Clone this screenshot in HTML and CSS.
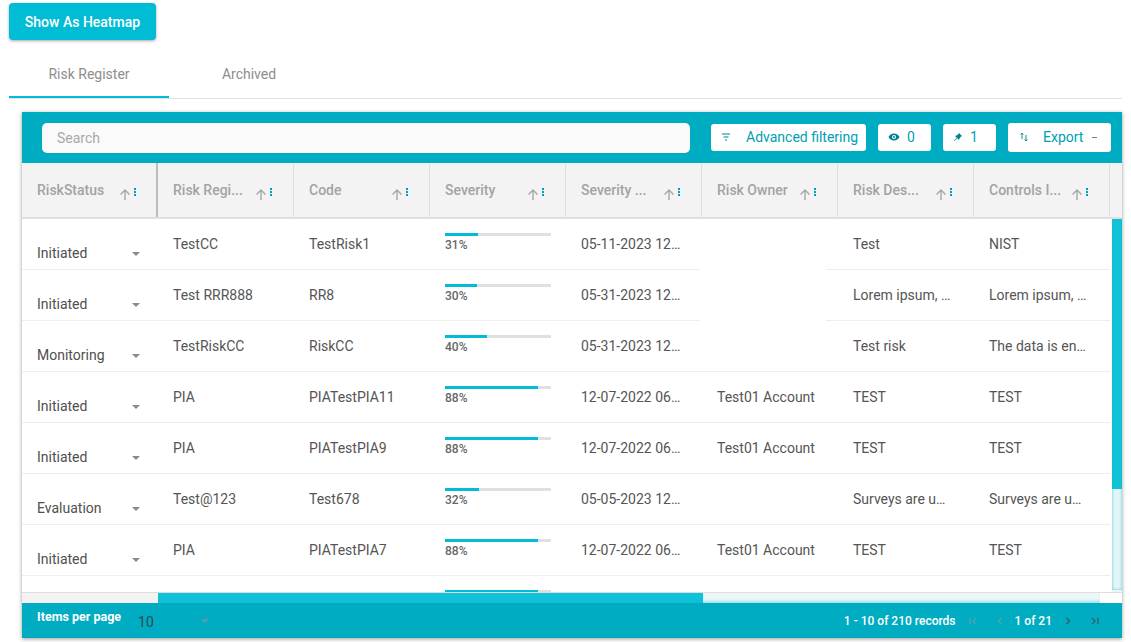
FILE: index.html
```html
<!DOCTYPE html>
<html lang="en">
<head>
  <meta charset="UTF-8" />
  <title>Risk Register</title>
  <link rel="stylesheet" href="styles.css">
</head>
<body>
  <button class="heatmap-btn">Show As Heatmap</button>

  <div class="tabs">
    <div class="tab active">Risk Register</div>
    <div class="tab">Archived</div>
  </div>

  <div class="card">
    <div class="toolbar">
      <div class="search">Search</div>
      <div class="tool tool-filter">
        <svg width="12" height="12" viewBox="0 0 12 12"><path d="M2 3h8M3.500 6h5M5 9h2" stroke="#00838f" stroke-width="1"/></svg>
        <span>Advanced filtering</span>
      </div>
      <div class="tool tool-small">
        <svg width="12" height="12" viewBox="0 0 24 24"><path fill="#00838f" d="M12 5C7 5 3 8 1 12c2 4 6 7 11 7s9-3 11-7c-2-4-6-7-11-7zm0 11a4 4 0 1 1 0-8 4 4 0 0 1 0 8zm0-6a2 2 0 1 0 0 4 2 2 0 0 0 0-4z"/></svg>
        <span>0</span>
      </div>
      <div class="tool tool-small">
        <svg width="10" height="10" viewBox="0 0 10 10"><path fill="#00838f" d="M6 1l3 3-1 .5-1.500 2L6 8 4.200 6.200 1.500 9 1 8.500l2.800-2.700L2 4l1.500-.5 2-1.500z"/></svg>
        <span>1</span>
      </div>
      <div class="tool tool-export">
        <svg width="10" height="10" viewBox="0 0 10 10"><path d="M3 1v6M1.800 2.500L3 1l1.200 1.500M7 9V3M5.800 7.500L7 9l1.200-1.500" stroke="#00838f" stroke-width=".9" fill="none"/></svg>
        <span class="export-label">Export</span>
        <span class="export-caret"></span>
      </div>
    </div>

    <div class="head-row">
      <div class="head-grid">
        <div class="hcell hcell-first"><span class="hlabel">RiskStatus</span><svg class="sort" width="12" height="12" viewBox="0 0 12 12"><path d="M6 12V2M1.500 6.500L6 2l4.500 4.500" stroke="#a6a6a6" stroke-width="1.400" fill="none"/></svg><i class="dots"></i></div>
        <div class="hcell"><span class="hlabel">Risk Regi...</span><svg class="sort" width="12" height="12" viewBox="0 0 12 12"><path d="M6 12V2M1.500 6.500L6 2l4.500 4.500" stroke="#a6a6a6" stroke-width="1.400" fill="none"/></svg><i class="dots"></i></div>
        <div class="hcell"><span class="hlabel">Code</span><svg class="sort" width="12" height="12" viewBox="0 0 12 12"><path d="M6 12V2M1.500 6.500L6 2l4.500 4.500" stroke="#a6a6a6" stroke-width="1.400" fill="none"/></svg><i class="dots"></i></div>
        <div class="hcell"><span class="hlabel">Severity</span><svg class="sort" width="12" height="12" viewBox="0 0 12 12"><path d="M6 12V2M1.500 6.500L6 2l4.500 4.500" stroke="#a6a6a6" stroke-width="1.400" fill="none"/></svg><i class="dots"></i></div>
        <div class="hcell"><span class="hlabel">Severity ...</span><svg class="sort" width="12" height="12" viewBox="0 0 12 12"><path d="M6 12V2M1.500 6.500L6 2l4.500 4.500" stroke="#a6a6a6" stroke-width="1.400" fill="none"/></svg><i class="dots"></i></div>
        <div class="hcell"><span class="hlabel">Risk Owner</span><svg class="sort" width="12" height="12" viewBox="0 0 12 12"><path d="M6 12V2M1.500 6.500L6 2l4.500 4.500" stroke="#a6a6a6" stroke-width="1.400" fill="none"/></svg><i class="dots"></i></div>
        <div class="hcell"><span class="hlabel">Risk Des...</span><svg class="sort" width="12" height="12" viewBox="0 0 12 12"><path d="M6 12V2M1.500 6.500L6 2l4.500 4.500" stroke="#a6a6a6" stroke-width="1.400" fill="none"/></svg><i class="dots"></i></div>
        <div class="hcell"><span class="hlabel">Controls I...</span><svg class="sort" width="12" height="12" viewBox="0 0 12 12"><path d="M6 12V2M1.500 6.500L6 2l4.500 4.500" stroke="#a6a6a6" stroke-width="1.400" fill="none"/></svg><i class="dots"></i></div>
      </div>
      <div class="head-gutter"></div>
    </div>

    <div class="body-wrap">
      <div class="rows">
        <div class="row">
          <div class="cell status"><span>Initiated</span><i class="caret"></i></div>
          <div class="cell">TestCC</div><div class="cell">TestRisk1</div>
          <div class="cell"><div class="bar"><div class="bar-fill" style="width:31%"></div></div><div class="pct">31%</div></div>
          <div class="cell">05-11-2023 12…</div><div class="cell"><div class="cover"></div></div>
          <div class="cell">Test</div><div class="cell">NIST</div>
        </div>
        <div class="row">
          <div class="cell status"><span>Initiated</span><i class="caret"></i></div>
          <div class="cell">Test RRR888</div><div class="cell">RR8</div>
          <div class="cell"><div class="bar"><div class="bar-fill" style="width:30%"></div></div><div class="pct">30%</div></div>
          <div class="cell">05-31-2023 12…</div><div class="cell"><div class="cover"></div></div>
          <div class="cell">Lorem ipsum, …</div><div class="cell">Lorem ipsum, …</div>
        </div>
        <div class="row">
          <div class="cell status"><span>Monitoring</span><i class="caret"></i></div>
          <div class="cell">TestRiskCC</div><div class="cell">RiskCC</div>
          <div class="cell"><div class="bar"><div class="bar-fill" style="width:40%"></div></div><div class="pct">40%</div></div>
          <div class="cell">05-31-2023 12…</div><div class="cell"></div>
          <div class="cell">Test risk</div><div class="cell">The data is en…</div>
        </div>
        <div class="row">
          <div class="cell status"><span>Initiated</span><i class="caret"></i></div>
          <div class="cell">PIA</div><div class="cell">PIATestPIA11</div>
          <div class="cell"><div class="bar"><div class="bar-fill" style="width:88%"></div></div><div class="pct">88%</div></div>
          <div class="cell">12-07-2022 06…</div><div class="cell">Test01 Account</div>
          <div class="cell">TEST</div><div class="cell">TEST</div>
        </div>
        <div class="row">
          <div class="cell status"><span>Initiated</span><i class="caret"></i></div>
          <div class="cell">PIA</div><div class="cell">PIATestPIA9</div>
          <div class="cell"><div class="bar"><div class="bar-fill" style="width:88%"></div></div><div class="pct">88%</div></div>
          <div class="cell">12-07-2022 06…</div><div class="cell">Test01 Account</div>
          <div class="cell">TEST</div><div class="cell">TEST</div>
        </div>
        <div class="row">
          <div class="cell status"><span>Evaluation</span><i class="caret"></i></div>
          <div class="cell">Test@123</div><div class="cell">Test678</div>
          <div class="cell"><div class="bar"><div class="bar-fill" style="width:32%"></div></div><div class="pct">32%</div></div>
          <div class="cell">05-05-2023 12…</div><div class="cell"></div>
          <div class="cell">Surveys are u…</div><div class="cell">Surveys are u…</div>
        </div>
        <div class="row">
          <div class="cell status"><span>Initiated</span><i class="caret"></i></div>
          <div class="cell">PIA</div><div class="cell">PIATestPIA7</div>
          <div class="cell"><div class="bar"><div class="bar-fill" style="width:88%"></div></div><div class="pct">88%</div></div>
          <div class="cell">12-07-2022 06…</div><div class="cell">Test01 Account</div>
          <div class="cell">TEST</div><div class="cell">TEST</div>
        </div>
        <div class="row">
          <div class="cell status"></div>
          <div class="cell"></div><div class="cell"></div>
          <div class="cell"><div class="bar"><div class="bar-fill" style="width:88%"></div></div></div>
          <div class="cell"></div><div class="cell"></div>
          <div class="cell"></div><div class="cell"></div>
        </div>
      </div>
      <div class="vscroll"><div class="vthumb"></div></div>
    </div>

    <div class="hscroll">
      <div class="hscroll-left"></div>
      <div class="hthumb"></div>
      <div class="hscroll-end"></div>
    </div>

    <div class="footer">
      <span class="per-page">Items per page</span>
      <span class="per-value">10</span>
      <i class="caret per-caret"></i>
      <span class="records">1 - 10 of 210 records</span>
      <svg class="pager pager-first" width="12" height="12" viewBox="0 0 12 12"><path d="M3 3v6M9 3L6 6l3 3" stroke="#4fa3b2" stroke-width="1.400" fill="none"/></svg>
      <svg class="pager pager-prev" width="12" height="12" viewBox="0 0 12 12"><path d="M7.500 3L4.500 6l3 3" stroke="#4fa3b2" stroke-width="1.400" fill="none"/></svg>
      <span class="page-of">1 of 21</span>
      <svg class="pager pager-next" width="12" height="12" viewBox="0 0 12 12"><path d="M4.500 3l3 3-3 3" stroke="#37606c" stroke-width="1.400" fill="none"/></svg>
      <svg class="pager pager-last" width="12" height="12" viewBox="0 0 12 12"><path d="M3 3l3 3-3 3M9 3v6" stroke="#37606c" stroke-width="1.400" fill="none"/></svg>
    </div>
  </div>
</body>
</html>
```

FILE: styles.css
```css
html, body {
  margin: 0;
  padding: 0;
  height: 100%;
  overflow: hidden;
  background: #fff;
  font-family: Roboto, sans-serif;
  font-size: 14px;
  color: #555;
}

body {
  padding: 3px 9px 0 9px;
  box-sizing: border-box;
}

.heatmap-btn {
  display: block;
  width: 147px;
  height: 37px;
  padding: 0;
  border: none;
  border-radius: 4px;
  background: #00bcd4;
  color: #fff;
  font-family: Roboto, sans-serif;
  font-size: 14px;
  font-weight: 500;
  box-shadow: 0 1px 3px rgba(0, 0, 0, 0.35);
}

.tabs {
  display: flex;
  height: 59px;
  border-bottom: 1px solid #e0e0e0;
  box-sizing: border-box;
}

.tab {
  width: 160px;
  height: 58px;
  padding-top: 26px;
  box-sizing: border-box;
  text-align: center;
  font-size: 14px;
  color: #8e8e8e;
}

.tab.active {
  border-bottom: 2px solid #00bcd4;
}

.card {
  width: 1100px;
  margin: 13px 0 0 13px;
  box-shadow: 0 1px 4px rgba(0, 0, 0, 0.4);
}

.toolbar {
  display: flex;
  align-items: center;
  height: 51px;
  padding: 0 10px 0 20px;
  box-sizing: border-box;
  background: #00acc1;
}

.search {
  width: 648px;
  height: 30px;
  margin-right: 21px;
  padding-left: 15px;
  box-sizing: border-box;
  border-radius: 5px;
  background: #fafafa;
  color: #a8a8a8;
  line-height: 30px;
}

.tool {
  display: flex;
  align-items: center;
  height: 27px;
  margin-right: 12px;
  padding-bottom: 1px;
  box-sizing: border-box;
  border-radius: 3px;
  background: #fff;
  color: #00a0b4;
}

.tool-filter {
  width: 155px;
  padding-left: 9px;
  white-space: nowrap;
}

.tool-filter span {
  margin-left: 14px;
}

.tool-small {
  width: 53px;
  padding-left: 10px;
}

.tool-small span {
  margin-left: 7px;
}

.tool-export {
  width: 103px;
  height: 29px;
  margin-right: 0;
  padding-left: 11px;
}

.export-label {
  margin-left: 14px;
}

.export-caret {
  width: 5px;
  height: 1px;
  margin-left: 9px;
  background: #5a8f9a;
}

.head-row {
  display: flex;
  height: 56px;
  border-bottom: 2px solid #e0e0e0;
  box-sizing: border-box;
  background: #f3f3f3;
}

.head-grid {
  display: grid;
  grid-template-columns: repeat(8, 136px);
}

.hcell {
  display: flex;
  align-items: center;
  padding-left: 15px;
  box-sizing: border-box;
  border-right: 1px solid #e0e0e0;
  font-size: 14px;
  font-weight: 500;
  color: #a3a3a3;
  position: relative;
}

.hcell-first {
  border-right: 2px solid #bdbdbd;
}

.hlabel {
  white-space: nowrap;
}

.sort {
  position: absolute;
  left: 97px;
  top: 25px;
}

.dots {
  position: absolute;
  left: 112px;
  top: 25px;
  width: 2px;
  height: 2px;
  background: #00a0b4;
  box-shadow: 0 3px 0 #00a0b4, 0 6px 0 #00a0b4;
}

.head-gutter {
  flex: 1;
}

.body-wrap {
  display: flex;
  height: 373px;
  overflow: hidden;
  background: #fff;
}

.rows {
  width: 1088px;
  flex-shrink: 0;
}

.row {
  display: grid;
  grid-template-columns: repeat(8, 136px);
  height: 51px;
  border-bottom: 1px solid #eeeeee;
  box-sizing: border-box;
}

.cell {
  padding: 17px 15px 0 15px;
  box-sizing: border-box;
  line-height: 16px;
  white-space: nowrap;
  overflow: hidden;
  color: #555;
  position: relative;
}

.status {
  display: flex;
  justify-content: space-between;
  padding: 26px 18px 0 15px;
  overflow: visible;
  color: #4f4f4f;
}

.caret {
  width: 0;
  height: 0;
  margin-top: 7px;
  border-left: 4px solid transparent;
  border-right: 4px solid transparent;
  border-top: 4px solid #8a8a8a;
}

.bar {
  height: 3px;
  margin-top: -3px;
  background: #e0e0e0;
  width: 106px;
}

.bar-fill {
  height: 100%;
  background: #00bcd4;
}

.pct {
  margin-top: 1px;
  font-size: 12px;
  font-weight: 500;
  line-height: 16px;
  color: #666;
}

.cover {
  position: absolute;
  left: -2px;
  right: 12px;
  bottom: -1px;
  height: 2px;
  background: #fff;
  z-index: 1;
}

.cell:has(.cover) {
  overflow: visible;
}

.vscroll {
  width: 10px;
  margin-left: 2px;
  background: #f3f3f3;
}

.vthumb {
  height: 371px;
  background: linear-gradient(to bottom, #12c2d8 0, #12c2d8 270px, #e3f5f8 270px, #e3f5f8 100%);
  box-shadow: inset 0 0 3px rgba(0, 188, 212, 0.7);
}

.hscroll {
  display: flex;
  height: 11px;
  background: #f3f3f3;
  border-top: 1px solid #ddd;
  box-sizing: border-box;
}

.hscroll-left {
  width: 136px;
}

.hthumb {
  width: 942px;
  background: linear-gradient(to right, #12c2d8 0, #12c2d8 545px, #eef7f8 545px, #eef7f8 100%);
  box-shadow: inset 0 -3px 3px -1px rgba(0, 188, 212, 0.35);
}

.hscroll-end {
  width: 22px;
  background: #fff;
}

.footer {
  display: flex;
  align-items: center;
  height: 35px;
  padding: 0 21px 0 15px;
  box-sizing: border-box;
  background: #00acc1;
  color: #fff;
  font-size: 12px;
  font-weight: 500;
}

.per-page {
  margin-bottom: 9px;
  font-size: 12.500px;
  font-weight: 700;
}

.per-value {
  margin: 2px 0 0 17px;
  font-size: 14px;
  font-weight: 400;
  color: #37474f;
}

.per-caret {
  margin: 0 0 0 47px;
  border-top-color: #5f9aa6;
}

.records {
  margin-left: auto;
}

.pager {
  flex-shrink: 0;
}

.pager-first {
  margin-left: 11px;
}

.pager-prev {
  margin-left: 15px;
}

.page-of {
  margin-left: 9px;
}

.pager-next {
  margin-left: 10px;
}

.pager-last {
  margin-left: 15px;
}
```
